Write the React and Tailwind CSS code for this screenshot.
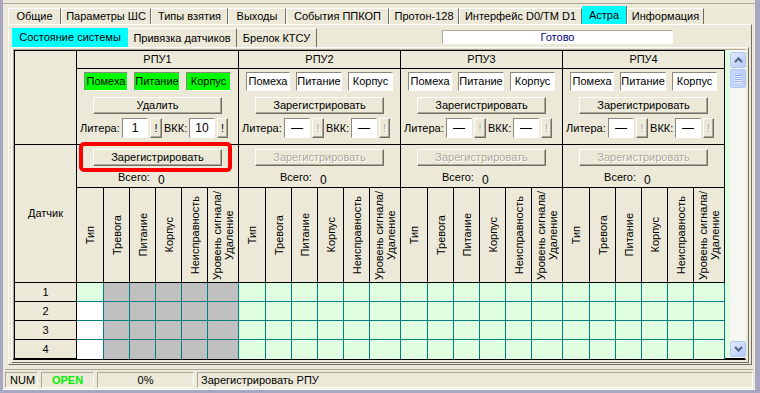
import React from 'react'

const H = 'border border-black p-0'
const colW = ['w-[27px]', 'w-[26px]', 'w-[26px]', 'w-[26px]', 'w-[26px]', 'w-[31px]']
const heads = ['Тип', 'Тревога', 'Питание', 'Корпус', 'Неисправность', null]

const tabs1 = [
  ['Общие', 'w-[53px]'],
  ['Параметры ШС', 'w-[90px]'],
  ['Типы взятия', 'w-[77px]'],
  ['Выходы', 'w-[58px]'],
  ['События ППКОП', 'w-[103px]'],
  ['Протон-128', 'w-[70px]'],
  ['Интерфейс D0/TM D1', 'w-[123px]'],
  ['Астра', 'w-[45px]', true],
  ['Информация', 'w-[77px]'],
]

function Btn({ children, disabled, className = '' }) {
  return (
    <div
      className={`flex items-center justify-center bg-[#ECE9D8] border border-t-white border-l-white border-r-[#716F64] border-b-[#716F64] shadow-[inset_-1px_-1px_0_#ACA899] whitespace-nowrap ${
        disabled ? 'text-[#ACA899] [text-shadow:1px_1px_0_#fff]' : 'text-black'
      } ${className}`}
    >
      {children}
    </div>
  )
}

function Ind({ children, on, w }) {
  return (
    <div
      className={`h-[19px] ${w} flex items-center justify-center border border-t-[#8C8A7E] border-l-[#8C8A7E] border-r-white border-b-white ${
        on ? 'bg-[#00FF00]' : 'bg-white'
      }`}
    >
      {children}
    </div>
  )
}

function Field({ children }) {
  return (
    <div className="w-[26px] h-[20px] ml-[0px] bg-white flex items-center justify-center border border-t-[#8C8A7E] border-l-[#8C8A7E] border-r-white border-b-white text-[12px]">
      {children}
    </div>
  )
}

function RpuTop({ active }) {
  return (
    <div className="flex flex-col items-center pt-[3px] h-[75px]">
      <div className="flex gap-[6px]">
        <Ind on={active} w="w-[44px]">Помеха</Ind>
        <Ind on={active} w="w-[46px]">Питание</Ind>
        <Ind on={active} w="w-[45px]">Корпус</Ind>
      </div>
      <Btn className="mt-[6px] w-[129px] h-[17px]">{active ? 'Удалить' : 'Зарегистрировать'}</Btn>
      <div className="self-stretch flex items-center mt-[4px] pl-[3px] h-[20px]">
        <span className="w-[42px]">Литера:</span>
        <Field>{active ? '1' : '—'}</Field>
        <Btn disabled={!active} className="ml-[2px] w-[12px] h-[20px]">!</Btn>
        <span className="ml-[2px] w-[25px]">ВКК:</span>
        <Field>{active ? '10' : '—'}</Field>
        <Btn disabled={!active} className="ml-[2px] w-[11px] h-[20px]">!</Btn>
      </div>
    </div>
  )
}

function RpuMid({ active }) {
  return (
    <div className="relative flex flex-col h-[42px] pt-[4px]">
      <Btn disabled={!active} className="self-center w-[129px] h-[17px]">Зарегистрировать</Btn>
      <div className="mt-[6px] pl-[41px] flex items-start">
        Всего:<span className="ml-[8px] mt-[2px] text-[12px]">0</span>
      </div>
      {active && (
        <div className="absolute left-[2px] top-[-3px] w-[153px] h-[30px] border-4 border-[#FF0000] rounded-[5px]" />
      )}
    </div>
  )
}

function ScrollBtn({ up }) {
  return (
    <div className="w-[16px] h-[16px] rounded-[2px] border border-[#B4C8F4] bg-linear-to-br from-[#E2EAFE] to-[#B5CAF7] flex items-center justify-center">
      <svg width="9" height="6" viewBox="0 0 9 6">
        <path d={up ? 'M1 5 L4.5 1.5 L8 5' : 'M1 1 L4.5 4.5 L8 1'} stroke="#4D6185" strokeWidth="2" fill="none" />
      </svg>
    </div>
  )
}

function cellBg(g, c, r) {
  if (g > 0) return 'bg-[#E0FFE0]'
  if (c > 0) return 'bg-[#C0C0C0]'
  return r === 1 ? 'bg-[#E0FFE0]' : 'bg-white'
}

export default function App() {
  return (
    <div className="w-[760px] h-[393px] bg-[#ECE9D8] border-l-[3px] border-r-[5px] border-b-[3px] border-[#A8A7C2] flex flex-col font-['Liberation_Sans',Arial,sans-serif] text-[11px] text-black leading-none overflow-hidden">
      {/* top edge */}
      <div className="h-[6px] pt-[3px]">
        <div className="border-t border-[#ACA899]" />
      </div>

      {/* first tab row */}
      <div className="h-[18px] flex items-end pl-[5px]">
        {tabs1.map(([t, w, act]) => (
          <div
            key={t}
            className={`${w} ${act ? 'h-[18px] bg-[#00FFFF]' : 'h-[16px] border-t border-l border-white'} border-r border-r-[#716F64] flex items-center justify-center whitespace-nowrap`}
          >
            {t}
          </div>
        ))}
      </div>

      {/* outer page */}
      <div className="ml-[5px] mr-[3px] h-[341px] border border-t-white border-l-white border-r-[#716F64] border-b-[#716F64] px-[2px] flex flex-col">
        <div className="mt-[3px] h-[19px] flex ml-[1px]">
          <div className="w-[116px] bg-[#00FFFF] flex items-center justify-center">Состояние системы</div>
          <div className="w-[109px] border-t border-white border-r border-r-[#716F64] flex items-center justify-center">Привязка датчиков</div>
          <div className="w-[80px] border-t border-white border-r border-r-[#716F64] flex items-center justify-center">Брелок КТСУ</div>
          <div className="ml-[125px] mt-[2px] w-[231px] h-[14px] bg-white border border-t-[#ACA899] border-l-[#ACA899] border-r-white border-b-white flex items-center justify-center text-[#000080]">
            Готово
          </div>
        </div>

        {/* inner page */}
        <div className="h-[316px] border border-t-white border-l-white border-r-[#716F64] border-b-[#716F64] pt-[1px]">
          <div className="ml-[1px] w-[733px] h-[311px] flex border border-[#ACA899] border-r-white border-b-2 border-b-black">
            <table className="table-fixed border-collapse w-[710px] shrink-0 self-start">
              <colgroup>
                <col className="w-[62px]" />
                {[0, 1, 2, 3].map((g) => colW.map((w, i) => <col key={g + '-' + i} className={w} />))}
              </colgroup>
              <tbody>
                <tr className="h-[18px]">
                  <td rowSpan={2} className={H} />
                  {[1, 2, 3, 4].map((n) => (
                    <td key={n} colSpan={6} className={`${H} text-center`}>
                      РПУ{n}
                    </td>
                  ))}
                </tr>
                <tr className="h-[76px]">
                  {[1, 2, 3, 4].map((n) => (
                    <td key={n} colSpan={6} className={`${H} align-top`}>
                      <RpuTop active={n === 1} />
                    </td>
                  ))}
                </tr>
                <tr className="h-[43px]">
                  <td rowSpan={2} className={`${H} text-center align-middle`}>
                    Датчик
                  </td>
                  {[1, 2, 3, 4].map((n) => (
                    <td key={n} colSpan={6} className={`${H} align-top`}>
                      <RpuMid active={n === 1} />
                    </td>
                  ))}
                </tr>
                <tr className="h-[95px]">
                  {[0, 1, 2, 3].map((g) =>
                    heads.map((h, i) => (
                      <td key={g + '-' + i} className={`${H} text-center align-middle`}>
                        <div className="inline-block align-middle [writing-mode:vertical-rl] rotate-180 text-center leading-[12px] whitespace-nowrap">
                          {h || (
                            <>
                              Уровень сигнала/
                              <br />
                              Удаление
                            </>
                          )}
                        </div>
                      </td>
                    ))
                  )}
                </tr>
                {[1, 2, 3, 4].map((r) => (
                  <tr key={r} className="h-[19px]">
                    <td className={`${H} text-center ${r === 4 ? 'border-b-0' : ''}`}>{r}</td>
                    {[0, 1, 2, 3].map((g) =>
                      colW.map((_, c) => (
                        <td
                          key={g + '-' + c}
                          className={`border border-[#008080] p-0 ${cellBg(g, c, r)} ${r === 4 ? 'border-b-0' : ''}`}
                        />
                      ))
                    )}
                  </tr>
                ))}
              </tbody>
            </table>
            <div className="w-[5px] bg-[#E0FFE0] shrink-0" />
            <div className="w-[16px] shrink-0 bg-[#F6F6F2] flex flex-col pt-[2px] pb-[1px]">
              <ScrollBtn up />
              <div className="mt-[1px] h-[19px] rounded-[2px] border border-[#B4C8F4] bg-linear-to-r from-[#C9D8FC] to-[#BBCEF8] flex flex-col items-center justify-center gap-[1px]">
                {[0, 1, 2, 3].map((i) => (
                  <div key={i} className="w-[7px] h-[1px] bg-[#8FAEEF] shadow-[0_1px_0_#EEF3FF]" />
                ))}
              </div>
              <div className="flex-1" />
              <ScrollBtn />
            </div>
          </div>
        </div>
      </div>

      {/* separator */}
      <div className="h-[7px] pt-[4px] px-[2px]">
        <div className="border-t border-[#ACA899]" />
      </div>

      {/* status bar */}
      <div className="h-[17px] flex gap-[3px] pl-[2px] pr-[2px] pb-[1px]">
        <div className="w-[33px] h-[16px] border border-t-[#ACA899] border-l-[#ACA899] border-r-white border-b-white flex items-center pl-[4px]">
          NUM
        </div>
        <div className="w-[53px] h-[16px] border border-t-[#ACA899] border-l-[#ACA899] border-r-white border-b-white flex items-center justify-center font-bold text-[#00EE00]">
          OPEN
        </div>
        <div className="w-[97px] h-[16px] border border-t-[#ACA899] border-l-[#ACA899] border-r-white border-b-white flex items-center justify-center">
          0%
        </div>
        <div className="flex-1 h-[16px] border border-t-[#ACA899] border-l-[#ACA899] border-r-white border-b-white flex items-center pl-[3px]">
          Зарегистрировать РПУ
        </div>
      </div>
      <div className="h-[1px] bg-white" />
    </div>
  )
}
